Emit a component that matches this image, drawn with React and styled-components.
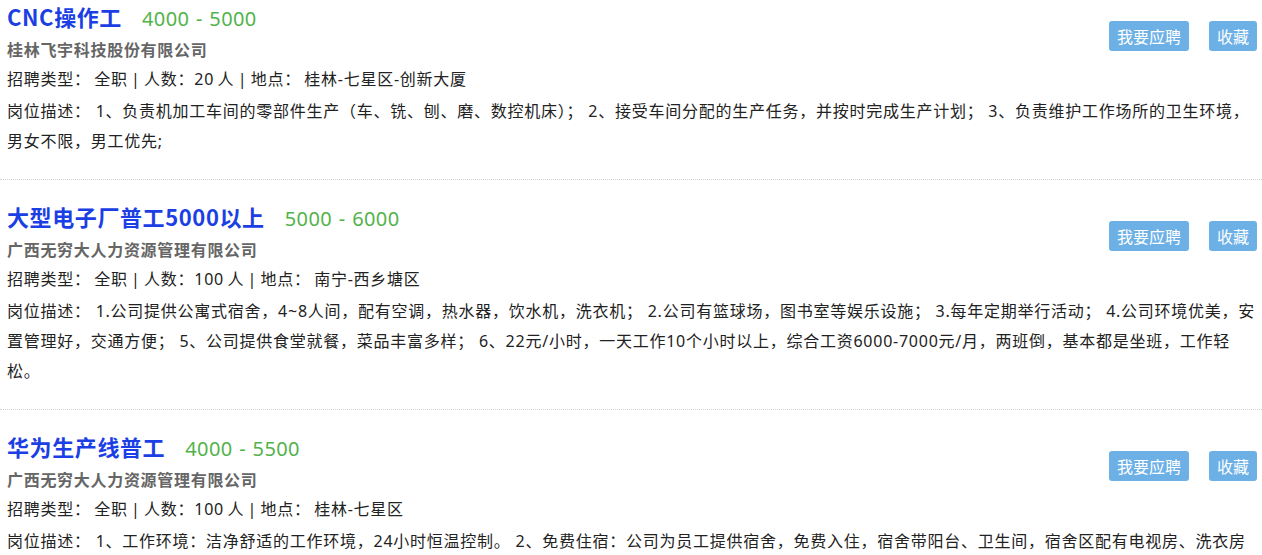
import styled, { createGlobalStyle } from 'styled-components';

const GlobalStyle = createGlobalStyle`
	body {
		margin: 0;
		background: #fff;
		font-family: 'Liberation Sans', 'Noto Sans CJK SC', sans-serif;
		color: #333;
	}
`;

const SList = styled.ul`
	list-style: none;
	margin: 0;
	padding: 0;
`;

const SItem = styled.li`
	display: grid;
	grid-template-columns: 1fr auto;
	grid-template-areas:
		'head actions'
		'desc desc';
	padding: 22px 5px 23px 7px;
	border-bottom: 1px dotted #d4d4d4;
	&:first-child {
		padding-top: 2px;
	}
`;

const SHead = styled.div`
	grid-area: head;
	min-width: 0;
`;

const STitleRow = styled.div`
	display: flex;
	align-items: baseline;
	height: 32px;
	line-height: 29px;
`;

const STitle = styled.a`
	font-family: 'Noto Sans CJK SC', sans-serif;
	font-size: 22px;
	font-weight: 700;
	color: #1b3fe4;
	text-decoration: none;
	letter-spacing: 0.6px;
`;

const SSalary = styled.span`
	margin-left: 20px;
	font-family: 'Noto Sans', 'Noto Sans CJK SC', sans-serif;
	font-size: 20px;
	color: #52b34a;
	letter-spacing: 0.4px;
	word-spacing: 1px;
`;

const SCompany = styled.div`
	font-family: 'Noto Sans CJK SC', sans-serif;
	font-size: 16px;
	font-weight: 700;
	color: #666;
	line-height: 30px;
	letter-spacing: 0.7px;
`;

const SLine = styled.div`
	font-family: 'Noto Sans', 'Noto Sans CJK SC', sans-serif;
	font-size: 16px;
	line-height: 30px;
	color: #222;
	letter-spacing: 0.75px;
`;

const SMeta = styled(SLine)`
	word-spacing: -1.5px;
`;

const SDesc = styled(SLine)`
	grid-area: desc;
	margin-top: 2px;
`;

const SActions = styled.div`
	grid-area: actions;
	display: flex;
	align-items: flex-start;
	gap: 20px;
	margin-top: 19px;
`;

const SButton = styled.button`
	height: 30px;
	padding: 0 8px;
	border: none;
	border-radius: 3px;
	background: #6cb0e6;
	color: #fff;
	font-family: 'Noto Sans CJK SC', sans-serif;
	font-size: 16px;
	line-height: 30px;
	cursor: pointer;
`;

const jobs = [
	{
		title: 'CNC操作工',
		salary: '4000 - 5000',
		company: '桂林飞宇科技股份有限公司',
		meta: '招聘类型： 全职 | 人数：20 人 | 地点： 桂林-七星区-创新大厦',
		desc: '岗位描述： 1、负责机加工车间的零部件生产（车、铣、刨、磨、数控机床）； 2、接受车间分配的生产任务，并按时完成生产计划； 3、负责维护工作场所的卫生环境，男女不限，男工优先;',
	},
	{
		title: '大型电子厂普工5000以上',
		salary: '5000 - 6000',
		company: '广西无穷大人力资源管理有限公司',
		meta: '招聘类型： 全职 | 人数：100 人 | 地点： 南宁-西乡塘区',
		desc: '岗位描述： 1.公司提供公寓式宿舍，4~8人间，配有空调，热水器，饮水机，洗衣机； 2.公司有篮球场，图书室等娱乐设施； 3.每年定期举行活动； 4.公司环境优美，安置管理好，交通方便； 5、公司提供食堂就餐，菜品丰富多样； 6、22元/小时，一天工作10个小时以上，综合工资6000-7000元/月，两班倒，基本都是坐班，工作轻松。',
	},
	{
		title: '华为生产线普工',
		salary: '4000 - 5500',
		company: '广西无穷大人力资源管理有限公司',
		meta: '招聘类型： 全职 | 人数：100 人 | 地点： 桂林-七星区',
		desc: '岗位描述： 1、工作环境：洁净舒适的工作环境，24小时恒温控制。 2、免费住宿：公司为员工提供宿舍，免费入住，宿舍带阳台、卫生间，宿舍区配有电视房、洗衣房等。',
	},
];

const App = () => (
	<>
		<GlobalStyle />
		<SList>
			{jobs.map((job) => (
				<SItem key={job.title}>
					<SHead>
						<STitleRow>
							<STitle href="#">{job.title}</STitle>
							<SSalary>{job.salary}</SSalary>
						</STitleRow>
						<SCompany>{job.company}</SCompany>
						<SMeta>{job.meta}</SMeta>
					</SHead>
					<SActions>
						<SButton>我要应聘</SButton>
						<SButton>收藏</SButton>
					</SActions>
					<SDesc>{job.desc}</SDesc>
				</SItem>
			))}
		</SList>
	</>
);

export default App;
